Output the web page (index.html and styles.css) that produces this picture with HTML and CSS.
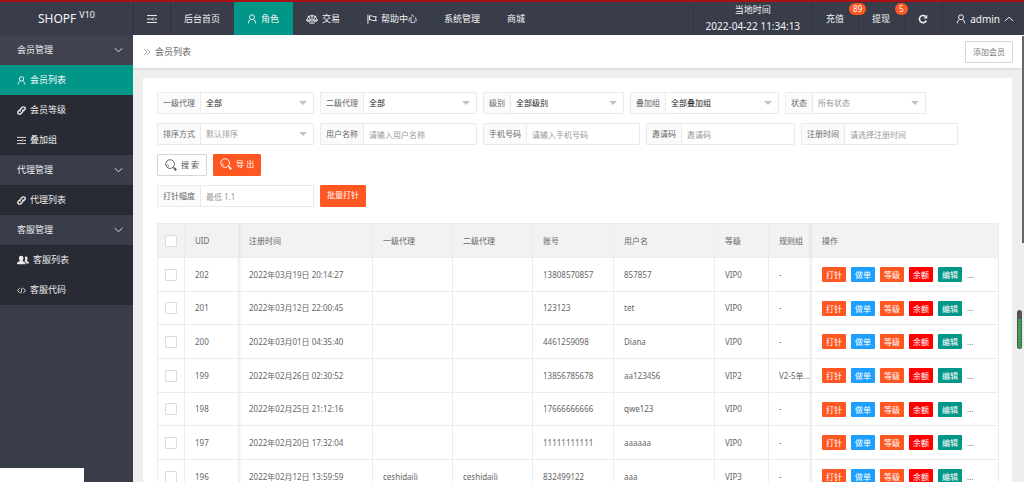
FILE: index.html
```html
<!DOCTYPE html>
<html lang="zh-CN">
<head>
<meta charset="utf-8">
<title>SHOPF V10</title>
<link rel="stylesheet" href="styles.css">
<script src="app.js" defer></script>
</head>
<body>
<svg class="sprite" aria-hidden="true">
  <symbol id="i-user" viewBox="0 0 16 16"><circle cx="8" cy="5.2" r="3.9"/><path d="M5.6 8.4C3.4 10 2.3 12 2.1 15M10.4 8.4c2.2 1.6 3.3 3.6 3.5 6.6"/></symbol>
  <symbol id="i-link" viewBox="0 0 16 16"><path class="thick" d="M6.300 9.700c-1.500-1.500-1.400-3 0-4.400l2.900-2.900c1.300-1.300 3.100-1.300 4.400 0s1.300 3.100 0 4.400L11.800 8.600M9.700 6.300c1.500 1.500 1.400 3 0 4.400l-2.900 2.900c-1.300 1.300-3.100 1.300-4.400 0s-1.300-3.100 0-4.400L4.200 7.400"/></symbol>
  <symbol id="i-menu" viewBox="0 0 16 16"><path d="M0 2.500h16M0 8h9M12 8h4M0 13.500h16M11 5.500L8.500 8l2.500 2.500"/></symbol>
  <symbol id="i-scale" viewBox="0 0 20 16"><path d="M10 .8v13.700M5.500 14.800h9M3 3.800l7-1.300 7 1.300M4.500 4L1 10h7zM15.500 4L12 10h7zM1 10c.5 3 6.500 3 7 0M12 10c.5 3 6.500 3 7 0"/></symbol>
  <symbol id="i-flag" viewBox="0 0 16 16"><path d="M1.500 1v14.500M4 3h4.500l1.200 1.300H15l-1.500 3 1.500 3.200H9.200L8 9.300H4z"/></symbol>
  <symbol id="i-code" viewBox="0 0 16 16"><path d="M4.500 4L1 8l3.500 4M11.500 4L15 8l-3.500 4M9.300 3L6.700 13"/></symbol>
  <symbol id="i-down" viewBox="0 0 16 10"><path d="M1 1.500l7 6.500 7-6.500"/></symbol>
  <symbol id="i-up" viewBox="0 0 16 10"><path d="M1 8.500L8 2l7 6.500"/></symbol>
  <symbol id="i-chev" viewBox="0 0 16 16"><path d="M2 2l6 6-6 6M8 2l6 6-6 6"/></symbol>
  <symbol id="i-refresh" viewBox="0 0 16 16"><path class="thick" d="M13.300 10.500A5.800 5.800 0 1 1 12 3.800"/><path class="solid" d="M14.800 1v6H8.800z"/></symbol>
  <symbol id="i-search" viewBox="0 0 16 16"><circle cx="6.800" cy="6.800" r="5.800"/><path d="M3.600 7.200a3.300 3.300 0 0 0 1.600 2.600M11 11l1 1"/><path class="thick" d="M12 12l3 3"/></symbol>
  <symbol id="i-group" viewBox="0 0 20 16"><path class="solid" d="M13 3c2-1.600 4.800-.4 4.600 2.500-.1 1.700-.7 2.700-1.400 3.300.1 1.500 3.800 1.600 3.800 5.200h-4.500c-.3-2.300-1.500-3-3-3.800 1.200-2 1.600-5 .5-7.200z"/><path class="solid" d="M7 1c2.600 0 3.900 1.800 3.700 4.400-.1 1.700-.8 2.900-1.500 3.600 0 1.800 5 1.700 5 6H0c0-4.300 4.900-4.200 4.900-6-.8-.7-1.500-1.900-1.600-3.600C3.100 2.800 4.400 1 7 1z"/></symbol>
</svg>

<header class="topbar">
  <a class="brand" href="#">SHOPF <sup>V10</sup></a>
  <button class="top-item toggle" type="button" aria-label="菜单"><svg class="icon"><use href="#i-menu"/></svg></button>
  <nav class="nav">
    <a class="top-item" href="#">后台首页</a>
    <a class="top-item active" href="#"><svg class="icon"><use href="#i-user"/></svg>角色</a>
    <a class="top-item" href="#"><svg class="icon wide"><use href="#i-scale"/></svg>交易</a>
    <a class="top-item" href="#"><svg class="icon"><use href="#i-flag"/></svg>帮助中心</a>
    <a class="top-item" href="#">系统管理</a>
    <a class="top-item" href="#">商城</a>
  </nav>
  <div class="account">
    <div class="clock"><span>当地时间</span><time>2022-04-22 11:34:13</time></div>
    <a class="top-item" href="#">充值<span class="badge">89</span></a>
    <a class="top-item" href="#">提现<span class="badge">5</span></a>
    <button class="top-item" type="button" aria-label="刷新"><svg class="icon"><use href="#i-refresh"/></svg></button>
    <a class="top-item profile" href="#"><svg class="icon"><use href="#i-user"/></svg>admin<svg class="icon arrow"><use href="#i-up"/></svg></a>
  </div>
</header>

<div class="shell">
  <aside class="sidebar">
    <button class="group hover" type="button">会员管理<svg class="icon"><use href="#i-down"/></svg></button>
    <a class="item active" href="#"><svg class="icon"><use href="#i-user"/></svg>会员列表</a>
    <a class="item" href="#"><svg class="icon"><use href="#i-link"/></svg>会员等级</a>
    <a class="item" href="#"><svg class="icon"><use href="#i-menu"/></svg>叠加组</a>
    <button class="group" type="button">代理管理<svg class="icon"><use href="#i-down"/></svg></button>
    <a class="item" href="#"><svg class="icon"><use href="#i-link"/></svg>代理列表</a>
    <button class="group" type="button">客服管理<svg class="icon"><use href="#i-down"/></svg></button>
    <a class="item" href="#"><svg class="icon wide"><use href="#i-group"/></svg>客服列表</a>
    <a class="item" href="#"><svg class="icon"><use href="#i-code"/></svg>客服代码</a>
  </aside>

  <main class="main">
    <div class="crumbs">
      <svg class="icon"><use href="#i-chev"/></svg><span>会员列表</span>
      <button class="btn add" type="button">添加会员</button>
    </div>
    <section class="card">
      <form class="filters">
        <div class="line">
          <div class="field select"><label for="f1">一级代理</label><select id="f1"><option>全部</option></select></div>
          <div class="field select"><label for="f2">二级代理</label><select id="f2"><option>全部</option></select></div>
          <div class="field select"><label for="f3">级别</label><select id="f3"><option>全部级别</option></select></div>
          <div class="field select"><label for="f4">叠加组</label><select id="f4"><option>全部叠加组</option></select></div>
          <div class="field select"><label for="f5">状态</label><select id="f5" class="empty"><option>所有状态</option></select></div>
        </div>
        <div class="line">
          <div class="field select"><label for="f6">排序方式</label><select id="f6" class="empty"><option>默认排序</option></select></div>
          <div class="field"><label for="f7">用户名称</label><input id="f7" type="text" placeholder="请输入用户名称"></div>
          <div class="field"><label for="f8">手机号码</label><input id="f8" type="text" placeholder="请输入手机号码"></div>
          <div class="field"><label for="f9">邀请码</label><input id="f9" type="text" placeholder="邀请码"></div>
          <div class="field"><label for="f10">注册时间</label><input id="f10" type="text" placeholder="请选择注册时间"></div>
        </div>
        <div class="line">
          <button class="btn" type="button"><svg class="icon"><use href="#i-search"/></svg>搜 索</button>
          <button class="btn danger" type="button"><svg class="icon"><use href="#i-search"/></svg>导 出</button>
        </div>
        <div class="line">
          <div class="field"><label for="f11">打针幅度</label><input id="f11" type="text" placeholder="最低 1.1"></div>
          <button class="btn danger" type="button">批量打针</button>
        </div>
      </form>
      <table class="grid">
        <colgroup><col class="c-check"><col class="c-s"><col class="c-date"><col class="c-m"><col class="c-m"><col class="c-acct"><col class="c-l"><col class="c-s"><col class="c-rule"><col></colgroup>
        <thead><tr><th class="check"><input type="checkbox" aria-label="全选"></th><th>UID</th><th class="after-fixed">注册时间</th><th>一级代理</th><th>二级代理</th><th>账号</th><th>用户名</th><th>等级</th><th class="rule">规则组</th><th class="ops">操作</th></tr></thead>
        <tbody id="rows"></tbody>
      </table>
    </section>
  </main>
</div>
<div class="status"></div>
<div class="scroll-thumb"></div>
<div class="meter"></div>
</body>
</html>
```
FILE: app.js
```js
const members = [
  ["202", "2022年03月19日 20:14:27", "", "", "13808570857", "857857", "VIP0", "-"],
  ["201", "2022年03月12日 22:00:45", "", "", "123123", "tet", "VIP0", "-"],
  ["200", "2022年03月01日 04:35:40", "", "", "4461259098", "Diana", "VIP0", "-"],
  ["199", "2022年02月26日 02:30:52", "", "", "13856785678", "aa123456", "VIP2", "V2-5单..."],
  ["198", "2022年02月25日 21:12:16", "", "", "17666666666", "qwe123", "VIP0", "-"],
  ["197", "2022年02月20日 17:32:04", "", "", "11111111111", "aaaaaa", "VIP0", "-"],
  ["196", "2022年02月12日 13:59:59", "ceshidaili", "ceshidaili", "832499122", "aaa", "VIP3", "-"]
];
const actions = [["打针", "orange"], ["做单", "blue"], ["等级", "orange"], ["余额", "red"], ["编辑", "green"]];
const buttons = actions.map(([t, c]) => `<button type="button" class="tag ${c}">${t}</button>`).join("");
document.getElementById("rows").innerHTML = members.map(m => {
  const cells = m.map((v, i) => `<td class="${i === 1 ? "after-fixed" : i === 7 ? "rule" : ""}">${v}</td>`).join("");
  return `<tr><td class="check"><input type="checkbox" aria-label="${m[0]}"></td>${cells}<td class="ops"><div class="actions">${buttons}<span>...</span></div></td></tr>`;
}).join("");
```
FILE: styles.css
```css
* { box-sizing: border-box; }
body {
  margin: 0;
  height: 100vh;
  overflow: hidden;
  display: flex;
  flex-direction: column;
  border-top: 2px solid #aa1014;
  background: #eee;
  color: #666;
  font: 8px/12px "Noto Sans", "Noto Sans CJK SC", sans-serif;
}
a { color: inherit; text-decoration: none; }
button, input, select { font: inherit; margin: 0; }
button { cursor: pointer; }
.sprite { position: absolute; width: 0; height: 0; }
.icon { width: 9px; height: 9px; flex: none; fill: none; stroke: currentColor; stroke-width: 1.6; }
.topbar .icon { width: 10px; height: 10px; }
.icon.wide, .topbar .icon.wide { width: 12px; height: 10px; }
.thick { stroke-width: 2.4; }
.solid { fill: currentColor; stroke: none; }

.topbar {
  display: flex;
  flex: none;
  height: 33px;
  background: #393d49;
  color: #f4f4f5;
  font-size: 9px;
}
.brand {
  width: 133px;
  flex: none;
  display: flex;
  align-items: center;
  justify-content: center;
  gap: 3px;
  font-size: 12px;
}
.brand sup { font-size: 9px; line-height: 26px; align-self: flex-start; }
.top-item {
  position: relative;
  display: flex;
  align-items: center;
  gap: 4px;
  padding: 0 14px 0 13px;
  border: 0;
  background: none;
  color: inherit;
  white-space: nowrap;
}
.toggle { width: 38px; padding: 0; justify-content: center; border: solid #30333d; border-width: 0 1px; }
.top-item.active { background: #009688; }
.nav { display: flex; flex: 1; }
.account { display: flex; }
.account > * { border-left: 1px solid #333641; }
.clock { padding: 0 12px; text-align: center; line-height: 16px; }
.clock span, .clock time { display: block; }
.clock time { font-size: 10px; }
.account .profile { padding-right: 10px; font-size: 10px; }
.badge {
  position: absolute;
  z-index: 1;
  top: 1px;
  left: 36px;
  padding: 0 4px;
  border-radius: 6px;
  background: #ff5722;
  color: #fff;
  font-size: 8px;
  line-height: 12px;
}
.topbar .arrow { height: 6px; }

.shell { display: flex; flex: 1; min-height: 0; }
.sidebar { width: 133px; flex: none; background: #393d49; color: #ececee; font-size: 9px; }
.group, .item {
  display: flex;
  align-items: center;
  gap: 4px;
  width: 100%;
  height: 30px;
  padding: 0 10px 0 17px;
  border: 0;
  background: #393d49;
  color: inherit;
}
.group { justify-content: space-between; }
.group .icon { height: 6px; }
.group.hover { background: #40434f; }
.item { background: #282b33; }
.item.active { background: #009688; color: #fff; }

.main { flex: 1; min-width: 0; overflow: hidden; }
.crumbs {
  display: flex;
  align-items: center;
  gap: 4px;
  height: 33px;
  padding: 0 11px 0 10px;
  background: #fff;
  box-shadow: 0 1px 2px #0000001a;
  font-size: 9px;
}
.crumbs .icon { width: 8px; height: 8px; stroke: #999; }
.btn {
  display: flex;
  align-items: center;
  gap: 4px;
  height: 22px;
  padding: 0 7px;
  border: 1px solid #d6d6d6;
  border-radius: 1px;
  background: #fff;
  color: #555;
}
.btn .icon { width: 12px; height: 12px; stroke-width: 1.2; }
.btn.danger { border-color: #ff5722; background: #ff5722; color: #fff; padding: 0 6px 3px; }
.btn.add { margin-left: auto; font-size: 8px; color: #777; }
.card { margin: 10px 12px 0 10px; padding: 14px 13px 14px 14px; background: #fff; box-shadow: 0 1px 2px #0000000d; }
.filters { display: flex; flex-direction: column; gap: 9px; margin-bottom: 16px; }
.line { display: flex; gap: 6px; }
.field { position: relative; display: flex; height: 22px; border: 1px solid #eaeaea; border-radius: 1px; }
.field label { padding: 0 5px; line-height: 20px; background: #fbfbfb; border-right: 1px solid #eaeaea; }
.field input, .field select {
  width: 112px;
  height: 20px;
  padding: 0 5px;
  border: 0;
  border-radius: 0;
  background: #fff;
  color: #222;
  appearance: none;
  outline: 0;
}
.field .empty, .field input::placeholder { color: #999; opacity: 1; }
.select::after {
  content: "";
  position: absolute;
  right: 6px;
  top: 8px;
  border: solid transparent;
  border-width: 4px 4px 0;
  border-top-color: #c2c2c2;
  pointer-events: none;
}

.grid { width: 100%; table-layout: fixed; border-collapse: collapse; }
.c-check { width: 27px; }
.c-s { width: 54px; }
.c-date { width: 134px; }
.c-m { width: 80px; }
.c-acct { width: 81px; }
.c-l { width: 101px; }
.c-rule { width: 43px; }
.grid tr { height: 34px; }
.grid tbody tr:nth-child(3n + 2) { height: 33px; }
.grid th, .grid td {
  padding: 0 0 0 10px;
  border: 1px solid #ececec;
  font-weight: 400;
  text-align: left;
  white-space: nowrap;
}
.grid th { background: #f2f2f2; }
.grid .check { padding: 0; text-align: center; }
.check input {
  display: block;
  width: 12px;
  height: 12px;
  margin: 0 auto;
  appearance: none;
  border: 1px solid #dcdcdc;
  border-radius: 1px;
  background: #fff;
}
.grid .after-fixed { box-shadow: inset 3px 0 3px -2px #00000014; }
.grid .rule { box-shadow: inset -3px 0 3px -2px #00000014; }
.actions { display: flex; align-items: center; gap: 5px; }
.tag { height: 15px; padding: 0 4px; border: 0; border-radius: 1px; color: #fff; line-height: 15px; }
.orange { background: #ff5722; }
.blue { background: #1e9fff; }
.red { background: #f00; }
.green { background: #009688; }

.status { position: fixed; left: 0; bottom: 0; width: 84px; height: 14px; background: #fff; }
.scroll-thumb { position: fixed; right: 0; top: 36px; width: 2px; height: 207px; background: #666; }
.meter {
  position: fixed;
  right: 2px;
  top: 310px;
  width: 5px;
  height: 39px;
  border: 1px solid #555;
  border-top-width: 9px;
  border-radius: 3px;
  background: repeating-linear-gradient(#2fae55 0 2px, #4c8a5c 2px 3px);
}
```
